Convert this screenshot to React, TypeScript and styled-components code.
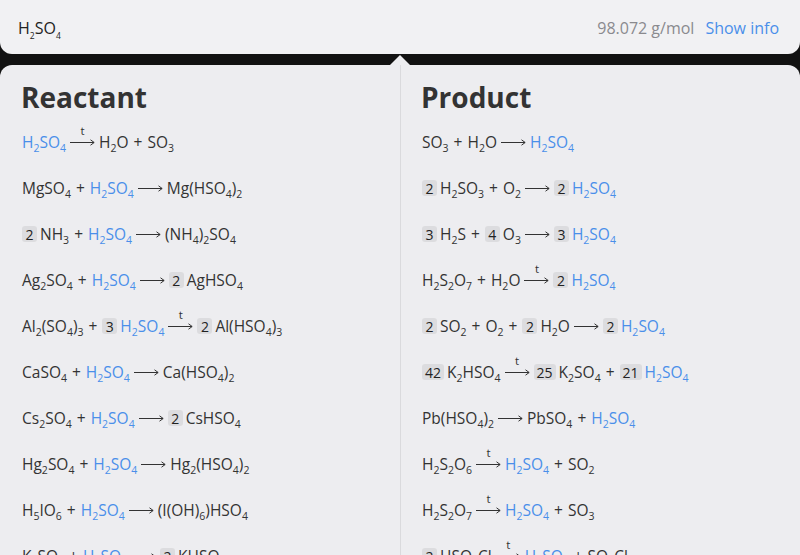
import React from "react";
import styled, { createGlobalStyle } from "styled-components";

const Global = createGlobalStyle`
  html, body { margin: 0; padding: 0; background: #121212; }
  body { font-family: "Open Sans", "DejaVu Sans", sans-serif; color: #333; overflow: hidden; }
`;

const Page = styled.div`
  width: 800px;
  height: 555px;
  display: flex;
  flex-direction: column;
  overflow: hidden;
`;

const TopBar = styled.header`
  height: 54px;
  flex: none;
  background: #f1f1f3;
  border-radius: 0 0 12px 12px;
  display: flex;
  align-items: center;
  justify-content: space-between;
  padding: 1px 21px 0 18px;
  box-sizing: border-box;
  font-size: 16px;
`;

const TopFormula = styled.div`
  color: #222;
  font-size: 16px;
`;

const TopSub = styled.sub`
  font-size: 8.5px;
  vertical-align: -5px;
  line-height: 0;
`;

const Meta = styled.div`
  display: flex;
  align-items: center;
  gap: 11px;
`;

const Mass = styled.span`
  color: #8a8a8e;
`;

const InfoLink = styled.span`
  color: #4a8fea;
`;

const Panel = styled.main`
  position: relative;
  margin-top: 11px;
  flex: 1;
  background: #ededf0;
  border-radius: 12px 12px 0 0;
  display: grid;
  grid-template-columns: 400px 1fr;

  &::before {
    content: "";
    position: absolute;
    left: 390px;
    top: -10px;
    border-left: 10px solid transparent;
    border-right: 10px solid transparent;
    border-bottom: 10px solid #ededf0;
  }
`;

const Column = styled.section<{ $divider?: boolean }>`
  padding: 12px 0 0 ${(p) => (p.$divider ? "20px" : "21px")};
  border-left: ${(p) => (p.$divider ? "1px solid #dadadd" : "none")};
`;

const Heading = styled.h2`
  margin: 0 0 2px;
  font-size: 28px;
  line-height: 40px;
  font-weight: 700;
  color: #333;
`;

const List = styled.div`
  display: flex;
  flex-direction: column;
`;

const Row = styled.div`
  height: 46px;
  display: flex;
  align-items: center;
  padding-left: 1px;
  font-size: 15.5px;
  color: #333;
  white-space: nowrap;
`;

const Formula = styled.span<{ $hl?: boolean }>`
  color: ${(p) => (p.$hl ? "#4a8fea" : "#333")};
`;

const Sub = styled.sub`
  font-size: 10.5px;
  vertical-align: -4px;
  line-height: 0;
`;

const Plus = styled.span`
  margin: 0 5px;
`;

const Coef = styled.span`
  display: inline-flex;
  align-items: center;
  justify-content: center;
  min-width: 15px;
  height: 16px;
  padding: 0 3px;
  box-sizing: border-box;
  border-radius: 3px;
  background: #dcdcdf;
  font-size: 14px;
  color: #222;
  margin-right: 3px;
`;

const ArrowWrap = styled.span`
  position: relative;
  display: inline-flex;
  align-items: center;
  margin: 0 4px;
  height: 10px;
`;

const ArrowLabel = styled.span`
  position: absolute;
  left: 0;
  right: 0;
  top: -12px;
  text-align: center;
  font-size: 11.5px;
  line-height: 12px;
  color: #333;
`;

const Arrow: React.FC<{ heat?: boolean }> = ({ heat }) => (
  <ArrowWrap>
    {heat && <ArrowLabel>t</ArrowLabel>}
    <svg width="25" height="8" viewBox="0 0 25 8">
      <path d="M0 4.5H24" stroke="#333" strokeWidth="1" fill="none" />
      <path d="M20.5 1.8L24.2 4.5L20.5 7.2" stroke="#333" strokeWidth="1" fill="none" />
    </svg>
  </ArrowWrap>
);

const renderFormula = (f: string, SubC: typeof Sub | typeof TopSub) => {
  const parts: React.ReactNode[] = [];
  const re = /(\d+)|([^\d]+)/g;
  let m: RegExpExecArray | null;
  let i = 0;
  while ((m = re.exec(f))) {
    if (m[1]) parts.push(<SubC key={i++}>{m[1]}</SubC>);
    else parts.push(<React.Fragment key={i++}>{m[2]}</React.Fragment>);
  }
  return parts;
};

const Equation: React.FC<{ eq: string }> = ({ eq }) => {
  const tokens = eq.split(" ");
  return (
    <Row>
      {tokens.map((t, i) => {
        if (t === "+") return <Plus key={i}>+</Plus>;
        if (t === "->") return <Arrow key={i} />;
        if (t === "=t>") return <Arrow key={i} heat />;
        if (/^\d+$/.test(t)) return <Coef key={i}>{t}</Coef>;
        return (
          <Formula key={i} $hl={t === "H2SO4"}>
            {renderFormula(t, Sub)}
          </Formula>
        );
      })}
    </Row>
  );
};

const reactant = [
  "H2SO4 =t> H2O + SO3",
  "MgSO4 + H2SO4 -> Mg(HSO4)2",
  "2 NH3 + H2SO4 -> (NH4)2SO4",
  "Ag2SO4 + H2SO4 -> 2 AgHSO4",
  "Al2(SO4)3 + 3 H2SO4 =t> 2 Al(HSO4)3",
  "CaSO4 + H2SO4 -> Ca(HSO4)2",
  "Cs2SO4 + H2SO4 -> 2 CsHSO4",
  "Hg2SO4 + H2SO4 -> Hg2(HSO4)2",
  "H5IO6 + H2SO4 -> (I(OH)6)HSO4",
  "K2SO4 + H2SO4 -> 2 KHSO4",
];

const product = [
  "SO3 + H2O -> H2SO4",
  "2 H2SO3 + O2 -> 2 H2SO4",
  "3 H2S + 4 O3 -> 3 H2SO4",
  "H2S2O7 + H2O =t> 2 H2SO4",
  "2 SO2 + O2 + 2 H2O -> 2 H2SO4",
  "42 K2HSO4 =t> 25 K2SO4 + 21 H2SO4",
  "Pb(HSO4)2 -> PbSO4 + H2SO4",
  "H2S2O6 =t> H2SO4 + SO2",
  "H2S2O7 =t> H2SO4 + SO3",
  "2 HSO3Cl =t> H2SO4 + SO2Cl2",
];

export default function App() {
  return (
    <Page>
      <Global />
      <TopBar>
        <TopFormula>{renderFormula("H2SO4", TopSub)}</TopFormula>
        <Meta>
          <Mass>98.072 g/mol</Mass>
          <InfoLink>Show info</InfoLink>
        </Meta>
      </TopBar>
      <Panel>
        <Column>
          <Heading>Reactant</Heading>
          <List>
            {reactant.map((e) => (
              <Equation key={e} eq={e} />
            ))}
          </List>
        </Column>
        <Column $divider>
          <Heading>Product</Heading>
          <List>
            {product.map((e) => (
              <Equation key={e} eq={e} />
            ))}
          </List>
        </Column>
      </Panel>
    </Page>
  );
}
